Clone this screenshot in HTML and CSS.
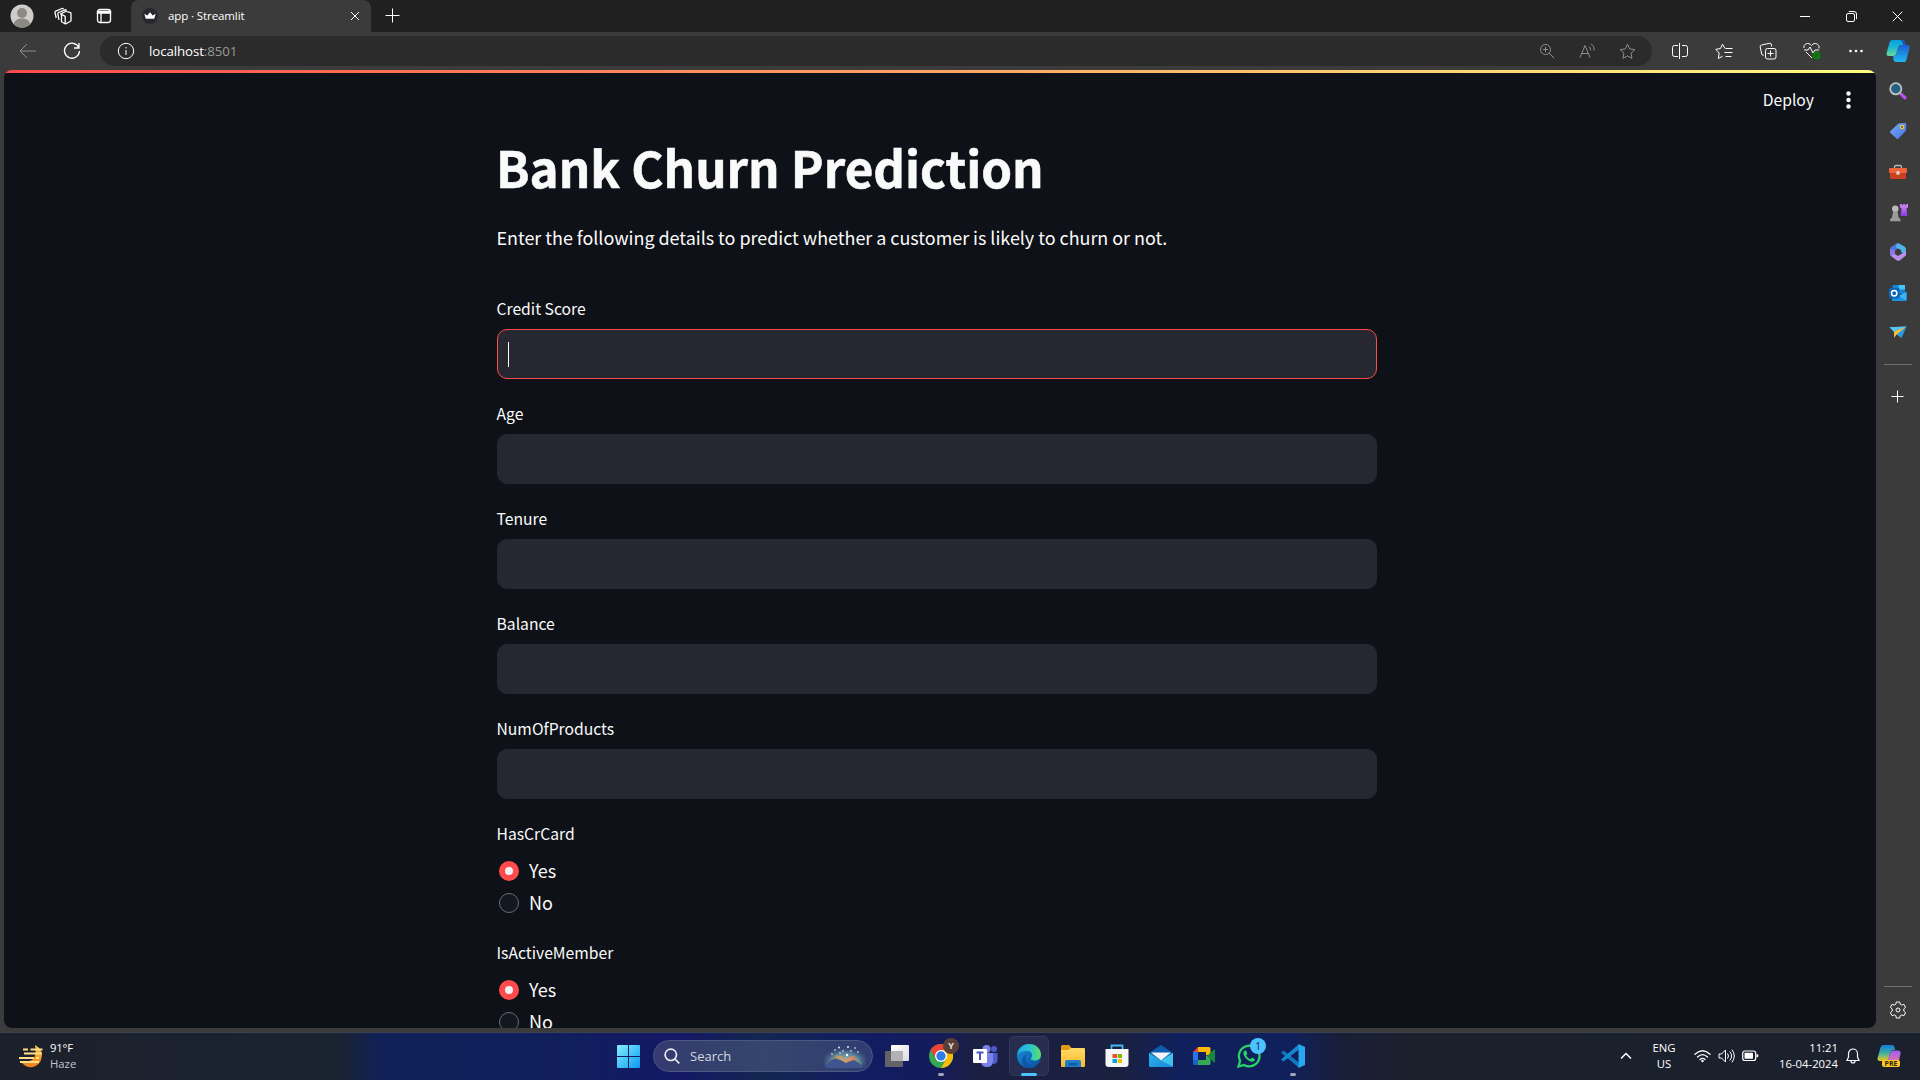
FILE: index.html
```html
<!DOCTYPE html>
<html lang="en">
<head>
<meta charset="utf-8">
<title>app · Streamlit</title>
<link rel="stylesheet" href="styles.css">
</head>
<body>
<svg class="defs" width="0" height="0" aria-hidden="true">
  <defs>
    <linearGradient id="win" x1="0" y1="0" x2="1" y2="1"><stop offset="0" stop-color="#83f0fc"/><stop offset="1" stop-color="#0c98f2"/></linearGradient>
    <linearGradient id="copA" x1="0" y1="0" x2="0" y2="1"><stop offset="0" stop-color="#069fe0"/><stop offset=".5" stop-color="#22b9d0"/><stop offset="1" stop-color="#69dc94"/></linearGradient>
    <linearGradient id="copB" x1="0" y1="0" x2="0" y2="1"><stop offset="0" stop-color="#1c5fd0"/><stop offset="1" stop-color="#20b8f4"/></linearGradient>
    <linearGradient id="preA" x1="0" y1="0" x2="0" y2="1"><stop offset="0" stop-color="#1877dc"/><stop offset=".5" stop-color="#39b1a0"/><stop offset="1" stop-color="#f0c820"/></linearGradient>
    <linearGradient id="preB" x1="0" y1="0" x2="0" y2="1"><stop offset="0" stop-color="#9c5cf5"/><stop offset="1" stop-color="#f87a90"/></linearGradient>
    <linearGradient id="tag" x1="0" y1="0" x2="1" y2="1"><stop offset="0" stop-color="#78a8ff"/><stop offset="1" stop-color="#4973dc"/></linearGradient>
    <linearGradient id="purple" x1="0" y1="0" x2="0" y2="1"><stop offset="0" stop-color="#d78cff"/><stop offset="1" stop-color="#8d36e0"/></linearGradient>
    <linearGradient id="edgeA" x1="0" y1="0" x2="1" y2="0"><stop offset="0" stop-color="#22a7e8"/><stop offset=".55" stop-color="#2cc4d0"/><stop offset="1" stop-color="#5fdf62"/></linearGradient>
    <linearGradient id="edgeB" x1="0" y1="0" x2="1" y2="1"><stop offset="0" stop-color="#1c93dc"/><stop offset="1" stop-color="#0c4c9c"/></linearGradient>
    <linearGradient id="folder" x1="0" y1="0" x2="0" y2="1"><stop offset="0" stop-color="#ffda65"/><stop offset="1" stop-color="#f8b92c"/></linearGradient>
    <linearGradient id="sun" x1="0" y1="0" x2="0" y2="1"><stop offset="0" stop-color="#ffc742"/><stop offset="1" stop-color="#f07c18"/></linearGradient>
    <linearGradient id="view" x1="0" y1="0" x2="1" y2="1"><stop offset="0" stop-color="#fff"/><stop offset="1" stop-color="#dcdce0"/></linearGradient>
    <linearGradient id="mail" x1="0" y1="0" x2="1" y2="1"><stop offset="0" stop-color="#28b5ec"/><stop offset="1" stop-color="#1e86d8"/></linearGradient>
    <linearGradient id="hill" x1="0" y1="0" x2="1" y2="0"><stop offset="0" stop-color="#8f765f"/><stop offset=".45" stop-color="#c7a56a"/><stop offset=".7" stop-color="#d98a66"/><stop offset="1" stop-color="#439485"/></linearGradient>
    <radialGradient id="sky" cx=".5" cy=".75" r=".62"><stop offset="0" stop-color="#b9b6a8"/><stop offset=".55" stop-color="#54809b"/><stop offset="1" stop-color="#303c68" stop-opacity="0"/></radialGradient>
  </defs>
</svg>

<header class="tabstrip">
  <div class="strip-tools">
    <span class="cell avatar"><svg width="24" height="24" viewBox="0 0 24 24"><circle cx="12" cy="12" r="11.500" fill="#cfcdca"/><circle cx="12" cy="9" r="5" fill="#8c8884"/><path d="M4 20.200c0-7.500 16-7.500 16 0a11.500 11.500 0 0 1-16 0z" fill="#8c8884"/></svg></span>
    <span class="cell"><svg class="line bold" width="18" height="18" viewBox="0 0 18 18"><path d="M2.200 11L1 5.500q-.2-1 .7-1.300L8 1.500q1-.2 1.500.7M5 13L3.800 6.800q0-1 .7-1.300L11 2.800q1-.2 1.500.8"/><path d="M8 7.500q-.5.200-.5 1v6.200l3.500 2q.5.300 1 0l4.500-2.500q.5-.3.500-1V6.500q0-.6-.5-.8L12.500 4.500q-.5-.2-1 0L6.800 6.800q-.4.300.2.600l3.500 1.400q.7.300.7 1v6.500"/></svg></span>
    <span class="cell"><svg class="line bold" width="16" height="16" viewBox="0 0 16 16"><rect x="1.500" y="1.500" width="13" height="13" rx="2.500"/><path d="M1.500 3.500h13v1.500h-13z" fill="#fff"/><path d="M5 5v9.500"/></svg></span>
  </div>
  <div class="tab">
    <svg class="favicon" width="16" height="16" viewBox="0 0 16 16"><circle cx="8" cy="8" r="8" fill="#262730"/><path d="M2.300 5.800l3 1.600L8 4.300l2.700 3.100 3-1.600-1.500 5H3.800z" fill="#fff"/></svg>
    <span class="tab-title">app · Streamlit</span>
    <svg class="line" width="10" height="10" viewBox="0 0 10 10"><path d="M1 1l8 8M9 1L1 9"/></svg>
  </div>
  <svg class="line newtab" width="15" height="15" viewBox="0 0 15 15"><path d="M7.500.5v14M.5 7.500h14"/></svg>
  <div class="window-controls">
    <span><svg class="line" width="10" height="10" viewBox="0 0 10 10"><path d="M0 5.500h10"/></svg></span>
    <span><svg class="line" width="11" height="11" viewBox="0 0 11 11"><rect x=".5" y="2.500" width="8" height="8" rx="1.500"/><path d="M2.800.5H8a2.500 2.500 0 0 1 2.500 2.500v5.200"/></svg></span>
    <span><svg class="line" width="11" height="11" viewBox="0 0 11 11"><path d="M.7.7l9.600 9.600M10.300.7L.7 10.300"/></svg></span>
  </div>
</header>

<nav class="toolbar">
  <span class="nav dim"><svg class="line" width="18" height="16" viewBox="0 0 18 16"><path d="M17 8H1M8 1L1 8l7 7"/></svg></span>
  <span class="nav"><svg class="line bold" width="18" height="18" viewBox="0 0 18 18"><path d="M15.800 5.500A7.500 7.500 0 1 0 16.500 9M16 1v5h-5"/></svg></span>
  <div class="address">
    <svg class="line" width="18" height="18" viewBox="0 0 18 18"><circle cx="9" cy="9" r="7.700"/><path d="M9 8v5M9 5v1.500"/></svg>
    <span class="url">localhost<span class="port">:8501</span></span>
    <div class="address-tools dim">
      <span><svg class="line" width="16" height="16" viewBox="0 0 16 16"><circle cx="6.500" cy="6.500" r="5"/><path d="M10.200 10.200l5 5M6.500 4v5M4 6.500h5"/></svg></span>
      <span><svg class="line" width="17" height="16" viewBox="0 0 17 16"><path d="M1 14.500L6 2.500l5 12M2.800 10.500h6.400M10 3.500q1.700 1 1.500 4M12 1q3.700 2 3 6.500"/></svg></span>
      <span><svg class="line" width="17" height="17" viewBox="0 0 17 17"><path d="M8.500 1.200l2.200 4.700 5.100.7-3.700 3.600.9 5.200-4.500-2.500L4 15.400l.9-5.200L1.200 6.600l5.100-.7z"/></svg></span>
    </div>
  </div>
  <div class="browser-actions">
    <span><svg class="line" width="16" height="18" viewBox="0 0 16 18"><path d="M6 3.500H2.500a2 2 0 0 0-2 2v7a2 2 0 0 0 2 2H6M10 3.500h3.500a2 2 0 0 1 2 2v7a2 2 0 0 1-2 2H10M7.500 1v16"/></svg></span>
    <span><svg class="line" width="18" height="17" viewBox="0 0 18 17"><path d="M10 5.500L7.500 1.200 5.500 5.500l-4.700.8L4.200 10l-.9 5.500 4.200-2.200M10.500 5.500h7M9.500 9.500h8M10.500 13.500h6"/></svg></span>
    <span><svg class="line" width="18" height="18" viewBox="0 0 18 18"><rect x="6.500" y="6.500" width="10.500" height="10.500" rx="2"/><path d="M11.500 8.500v6M8.500 11.500h6M12.500 4.500V3a1.800 1.800 0 0 0-2.200-1.700L2.500 3A1.800 1.800 0 0 0 1.200 5l1.500 7a1.800 1.800 0 0 0 2 1.300"/></svg></span>
    <span><svg class="line" width="18" height="18" viewBox="0 0 18 18"><path d="M1 6C0 2 5.500-.5 8.500 3.500 11.500-.5 17 2 16 6.500M1 8h4l2-3 3 6 2-3h4M3 10l6 6"/><circle cx="13.500" cy="13.500" r="4" fill="#107c10" stroke="none"/><path d="M11.800 13.500l1.200 1.200 2.200-2.400" stroke="#0a4f0a"/></svg></span>
    <span><svg width="16" height="4" viewBox="0 0 16 4" fill="#fff"><circle cx="2.500" cy="2" r="1.300"/><circle cx="8" cy="2" r="1.300"/><circle cx="13.500" cy="2" r="1.300"/></svg></span>
  </div>
  <svg class="copilot" width="24" height="22" viewBox="0 0 24 22"><path d="M6 0h8q2 0 2.500 2l.5 3h-2q-2 0-2.600 2l-2 6.500Q9.800 16 7.500 16H3Q0 16 .6 13L3.500 2.500Q4 0 6 0z" fill="url(#copA)"/><path d="M18 22h-8q-2 0-2.500-2L7 16h.7q2 0 2.700-2.500l2-6.500q.6-2 2.600-2H21q3 0 2.600 3L20.500 19.500Q20 22 18 22z" fill="url(#copB)"/><path d="M12 0h2q2 0 2.500 2l.7 3.500h3L19 2q-.5-2-2-2z" fill="#1557c5"/></svg>
</nav>

<div class="workspace">
  <main class="page">
    <div class="app-header">
      <span class="deploy">Deploy</span>
      <svg width="5" height="18" viewBox="0 0 5 18" fill="#fafafa"><circle cx="2.500" cy="2.500" r="2.200"/><circle cx="2.500" cy="9" r="2.200"/><circle cx="2.500" cy="15.500" r="2.200"/></svg>
    </div>
    <div class="form">
      <h1>Bank Churn Prediction</h1>
      <p class="intro">Enter the following details to predict whether a customer is likely to churn or not.</p>
      <div class="field"><label>Credit Score</label><div class="input focused"><span class="caret"></span></div></div>
      <div class="field"><label>Age</label><div class="input"></div></div>
      <div class="field"><label>Tenure</label><div class="input"></div></div>
      <div class="field"><label>Balance</label><div class="input"></div></div>
      <div class="field"><label>NumOfProducts</label><div class="input"></div></div>
      <div class="field radios"><label>HasCrCard</label>
        <div class="option"><span class="radio on"></span><span class="answer">Yes</span></div>
        <div class="option"><span class="radio"></span><span class="answer">No</span></div>
      </div>
      <div class="field radios"><label>IsActiveMember</label>
        <div class="option"><span class="radio on"></span><span class="answer">Yes</span></div>
        <div class="option"><span class="radio"></span><span class="answer">No</span></div>
      </div>
    </div>
  </main>
  <aside class="sidebar">
    <span class="side"><svg width="18" height="18" viewBox="0 0 18 18"><path d="M11.500 11.500l1.500 1.300" stroke="#c9c9c9" stroke-width="2"/><path d="M13 13l3 2.700" stroke="#c14cf5" stroke-width="3.200" stroke-linecap="round"/><circle cx="6.800" cy="6.800" r="5.600" fill="#24627f" stroke="#bfc3c5" stroke-width="1.800"/></svg></span>
    <span class="side"><svg width="18" height="18" viewBox="0 0 18 18"><path d="M9.500 1.500L16 1q1.200 0 1.200 1.200L17 8.500l-7.500 8q-1 1-2 0l-6-5.500q-1-1 0-2z" fill="url(#tag)"/><circle cx="13" cy="5" r="1.700" fill="#415b9c" stroke="#f4cf27" stroke-width="1.200"/></svg></span>
    <span class="side"><svg width="18" height="16" viewBox="0 0 18 16"><path d="M5.500 4.500V3q0-1.500 1.500-1.500h4q1.500 0 1.500 1.500v1.500" fill="none" stroke="#b7b7b7" stroke-width="1.300"/><rect y="4" width="18" height="5" rx="1" fill="#f0643c"/><path d="M1 9h16v5q0 1-1 1H2q-1 0-1-1z" fill="#c9401f"/><circle cx="9" cy="9" r="1.900" fill="#d9d5d1"/></svg></span>
    <span class="side"><svg width="19" height="19" viewBox="0 0 19 19"><path d="M11 1h1.800v1.300h1.300V1h1.800v1.300h1.300V1H19v3.500l-1.500 1 .8 7.500h-6.600l.8-7.500-1.500-1z" fill="url(#purple)"/><circle cx="6.300" cy="5.800" r="3.300" fill="#b9b9b9"/><path d="M4 8.500h4.600l.8 5.500 2.100 2.500v1.700H1v-1.700L3.200 14z" fill="#9b9b9b"/></svg></span>
    <span class="side"><svg width="18" height="18" viewBox="0 0 18 18"><path d="M1 5.500Q1 4.500 2 4l5.500-3.500Q9 0 9.500 1v4L6 7.500v6L2 13.500 1 12z" fill="#4c74d8"/><path d="M8 .5q1-.5 2 0l5.500 3q1.500 1 1.500 2.500v5.500L12 9V7L7 4.500z" fill="#4fb4ec"/><path d="M1.500 12.500L6 11l3 2 8-5v3.500q0 1-1 1.700l-5 4q-2 1-3.500 0z" fill="#b890ea"/><path d="M1 6v6l5-1V7z" fill="#8a78e0"/></svg></span>
    <span class="side"><svg width="18" height="18" viewBox="0 0 18 18"><path d="M3.500 1h12.500v9H3.500z" fill="#1784d8"/><path d="M9.500 1h6.500v4.500H9.500z" fill="#44c5f7"/><path d="M3 9l7 3 7.500-4v8q0 1-1 1H4q-1 0-1-1z" fill="#1b93e5"/><path d="M17.500 8v8.500l-8-4.500z" fill="#38b5f0"/><rect y="4" width="10.500" height="10.500" rx="1" fill="#0a65b7"/><circle cx="5.200" cy="9.200" r="2.700" fill="none" stroke="#fff" stroke-width="1.500"/></svg></span>
    <span class="side"><svg width="18" height="16" viewBox="0 0 18 16"><path d="M.5 2.200L17.500 1.500 12.500 13l-5-3.500z" fill="#2b9be9"/><path d="M.5 2.200l4.500 4.500L17.500 1.500z" fill="#55c7f5"/><path d="M5 6.700L17 1.800 7.500 9.500 5.200 13z" fill="#ffc229"/></svg></span>
    <hr>
    <span class="side add"><svg class="line" width="13" height="13" viewBox="0 0 13 13"><path d="M6.500.5v12M.5 6.500h12"/></svg></span>
    <div class="side-bottom">
      <hr>
      <span class="side gear"><svg class="line" width="18" height="18" viewBox="0 0 18 18"><path d="M7.300 1h3.400l.5 2.300 1.400.8 2.300-.8 1.700 3-1.800 1.600v2.200l1.800 1.600-1.700 3-2.300-.8-1.400.8-.5 2.300H7.300l-.5-2.300-1.400-.8-2.300.8-1.700-3 1.800-1.600V7.900L1.400 6.300l1.700-3 2.300.8 1.400-.8z" stroke-linejoin="round"/><circle cx="9" cy="9" r="2"/></svg></span>
    </div>
  </aside>
</div>

<footer class="taskbar">
  <div class="weather">
    <svg width="25" height="24" viewBox="0 0 25 24"><path d="M16 1q8.500 4.500 6.500 13A10.800 10.800 0 0 1 2 17q6 2 11-1t3-15z" fill="url(#sun)"/><path d="M4 5.500h5M11.500 5.500h12M5 9.500h18M0 14h15M17 14h3M1 18h19" stroke="#ffdf88" stroke-width="1.800"/></svg>
    <div class="weather-text"><span class="temp">91°F</span><span>Haze</span></div>
  </div>
  <div class="apps">
    <span class="app"><svg width="23" height="23" viewBox="0 0 23 23"><path d="M1 0h10v11H0V1q0-1 1-1zM12 0h10q1 0 1 1v10H12zM0 12h11v11H1q-1 0-1-1zM12 12h11v10q0 1-1 1H12z" fill="url(#win)"/></svg></span>
    <div class="search">
      <svg width="16" height="16" viewBox="0 0 16 16" fill="none" stroke="#e8eaf0" stroke-width="1.700" stroke-linecap="round"><circle cx="6.800" cy="6.800" r="5.700"/><path d="M11 11l3.800 3.800"/></svg>
      <span class="search-label">Search</span>
      <svg width="42" height="26" viewBox="0 0 42 26"><rect width="42" height="24" fill="url(#sky)"/><path d="M2 20q7-3 10-8 5 0 9 5 3-2 6-4 6-1 11 8v2H2z" fill="url(#hill)"/><path d="M1 22q6-6 11-6.500 5 1 10 4.500 4-2 8-3l8 5q2 3-1 3H4q-3 0-3-3z" fill="#3e5590"/><g fill="#fff"><circle cx="11" cy="7" r=".8"/><circle cx="15" cy="4.500" r=".9"/><circle cx="19" cy="8" r=".8"/><circle cx="24" cy="4" r=".9"/><circle cx="27" cy="8" r=".8"/><circle cx="31" cy="5" r=".8"/><circle cx="8" cy="11" r=".8"/><circle cx="16" cy="10" r=".8"/><circle cx="23" cy="12" r="1.200"/><circle cx="34" cy="9" r=".8"/></g></svg>
    </div>
    <span class="app"><svg width="24" height="22" viewBox="0 0 24 22"><rect y="6" width="18" height="16" rx="1" fill="#646468"/><rect x="6" width="18" height="16" rx="1" fill="url(#view)"/><path d="M6 6h12v10H6z" fill="#b2b2b6"/></svg></span>
    <span class="app running"><svg width="24" height="24" viewBox="0 0 24 24"><circle cx="12" cy="12" r="12" fill="#34a853"/><path d="M1.600 6A12 12 0 0 1 22.400 6H12l-5.200 9z" fill="#ea4335"/><path d="M22.400 6A12 12 0 0 1 12 24l5.200-9L12 6z" fill="#fbbc05"/><circle cx="12" cy="12" r="6" fill="#fff"/><circle cx="12" cy="12" r="4.700" fill="#2f7de9"/></svg><b class="badge profile">Y</b></span>
    <span class="app"><svg width="25" height="22" viewBox="0 0 25 22"><circle cx="21" cy="4" r="3" fill="#5059c9"/><path d="M17 8h7.500v7q0 4-4.500 4z" fill="#5059c9"/><circle cx="13.500" cy="4" r="4" fill="#7b83eb"/><path d="M8 8h12v8q0 6-6 6t-6-6z" fill="#7b83eb"/><rect y="4" width="14" height="14" rx="1" fill="#fff"/><path d="M3.500 7.500h7M7 7.500v7.500" stroke="#4b53bc" stroke-width="2"/></svg></span>
    <span class="app active"><svg width="24" height="24" viewBox="0 0 24 24"><circle cx="12" cy="12" r="12" fill="url(#edgeB)"/><path d="M0 11C1 4 6 0 12 0c7 0 12 5 12 10.500 0 4-3 6-6.500 6-3 0-4.500-1.300-3-3 2-4-1-6.500-4.500-6.500C5 7 1 9 0 11z" fill="url(#edgeA)"/><path d="M8.500 14c0 6 6 9 12.800 5.500Q17 25 11 24C4 23 3 13 10 9.500Q8.500 11 8.500 14z" fill="#0b58a8"/></svg></span>
    <span class="app"><svg width="24" height="22" viewBox="0 0 24 22"><path d="M0 1.500Q0 0 1.500 0H8l3 3.500V8H0z" fill="#e09b16"/><path d="M0 5h7.500L10 3h13q1 0 1 1v17q0 1-1 1H1q-1 0-1-1z" fill="url(#folder)"/><path d="M4 22v-5q0-2 2-2h12q2 0 2 2v5z" fill="#1d7fcb"/><path d="M7.500 18h9v2.500h-9z" fill="#105c9f"/></svg></span>
    <span class="app"><svg width="24" height="24" viewBox="0 0 24 24"><path d="M6.500 6V1.500h11V6" fill="none" stroke="#43b8f1" stroke-width="1.800"/><path d="M.5 5h23v15q0 3-3 3h-17q-3 0-3-3z" fill="#f4f5f7"/><path d="M7.500 10H12v4H7.500z" fill="#f25022"/><path d="M12.700 10h4.300v4h-4.300z" fill="#7fba00"/><path d="M7.500 15H12v4H7.500z" fill="#00a4ef"/><path d="M12.700 15h4.300v4h-4.300z" fill="#ffb900"/></svg></span>
    <span class="app"><svg width="24" height="22" viewBox="0 0 24 22"><path d="M0 8L12 0l12 8v5H0z" fill="#0d5cad"/><path d="M0 8l12 7.500L24 8v13q0 1-1 1H1q-1 0-1-1z" fill="url(#mail)"/><path d="M2 7.500h20l-10 8z" fill="#f1f5fa"/><path d="M12 15.500L24 8v13.500z" fill="#4fd3f7" opacity=".7"/></svg></span>
    <span class="app"><svg width="24" height="20" viewBox="0 0 24 20"><path d="M5 1v5H0z" fill="#ea4335"/><path d="M0 6h5v8H0z" fill="#2874e8"/><path d="M0 14h5v5H1.500Q0 19 0 17.500z" fill="#1a62ca"/><path d="M5 1h11q1.500 0 1.500 1.500V10L13 9V6H5z" fill="#fbb905"/><path d="M5 14h8v-4l4.500-1v8.500q0 1.500-1.500 1.500H5z" fill="#35a853"/><path d="M14 10l6.500-6q1.500-1 1.500.5v11q0 1.500-1.500.5z" fill="#188641"/></svg></span>
    <span class="app"><svg width="24" height="24" viewBox="0 0 24 24"><path d="M1.500 22.500l1.600-5.700A10.300 10.300 0 1 1 7 20.900z" fill="none" stroke="#27d466" stroke-width="2.300"/><path d="M8 6.500q-2.700 1.700-1 5 2.700 5 7.500 6.300 3 .3 3.500-2.600l-3-1.600-1.500 1.600q-3-1-4.400-4L10.400 10 9.200 6.800z" fill="#27d466"/></svg><b class="badge count">1</b></span>
    <span class="app running"><svg width="24" height="24" viewBox="0 0 24 24"><path d="M0 8.500l2.500-2L18 18.500V24z" fill="#0d78be"/><path d="M0 15.500L18 0v5.500L2.500 17.500z" fill="#1685cf"/><path d="M17.500 0L24 3v18l-6.500 3z" fill="#29a8ef"/></svg></span>
  </div>
  <div class="tray">
    <svg class="line chevron" width="12" height="8" viewBox="0 0 12 8"><path d="M1 6.500l5-5 5 5" stroke-width="1.500"/></svg>
    <div class="lang"><span>ENG</span><span>US</span></div>
    <div class="status">
      <svg class="line" width="17" height="14" viewBox="0 0 17 14" stroke-linecap="round"><path d="M1 5.300q7.500-7 15 0M3.500 8q5-4.800 10 0M6 10.500q2.500-2.300 5 0" stroke-width="1.300"/><circle cx="8.500" cy="12" r="1.200" fill="#fff" stroke="none"/></svg>
      <svg class="line" width="17" height="14" viewBox="0 0 17 14"><path d="M1 5h2.500L7.500 1v12L3.500 9H1zM9.500 4.500q2 2.500 0 5M11.800 2.500q3.500 4.500 0 9M14 .7q4.500 6.300 0 12.600"/></svg>
      <svg width="17" height="12" viewBox="0 0 17 12"><rect x=".7" y="1" width="13" height="9.500" rx="2.300" fill="none" stroke="#fff" stroke-width="1.200"/><rect x="2.500" y="2.800" width="8.500" height="6" rx=".8" fill="#fff"/><path d="M14.500 4q2 0 2 1.700t-2 1.700z" fill="#fff"/></svg>
    </div>
    <div class="clock"><span>11:21</span><span>16-04-2024</span></div>
    <svg class="line bell" width="14" height="16" viewBox="0 0 14 16"><path d="M1 12.500L2.500 9V5.500a4.500 4.500 0 0 1 9 0V9l1.500 3.500zM5 13q0 2 2 2t2-2" stroke-width="1.200"/></svg>
    <div class="pre"><svg width="24" height="22" viewBox="0 0 24 22"><path d="M6 0h9q2 0 2.500 2l.5 3h-2q-2 0-2.600 2l-2 7Q10.800 16 8.500 16H3Q0 16 .6 13L3.500 2.500Q4 0 6 0z" fill="url(#preA)"/><path d="M19 20h-9q-2 0-2.500-2L7 16h1.700q2 0 2.700-2.500l2-6q.6-2 2.600-2H21q3 0 2.600 3L21.500 17.500Q21 20 19 20z" fill="url(#preB)"/></svg><b>PRE</b></div>
  </div>
</footer>
</body>
</html>
```
FILE: styles.css
```css
* { box-sizing: border-box; }
body {
  margin: 0;
  width: 1920px;
  height: 1080px;
  overflow: hidden;
  display: flex;
  flex-direction: column;
  background: #3b3b3b;
  color: #fff;
  font-family: "Open Sans", "Noto Sans", sans-serif;
  font-size: 12px;
}
svg { display: block; flex: none; }
.defs { position: absolute; }
.line { fill: none; stroke: #fff; stroke-width: 1; }
.line.bold { stroke-width: 1.3; }
.dim .line { stroke: #8f8f8f; }

/* Tab strip */
.tabstrip { display: flex; height: 32px; background: #202020; }
.strip-tools { display: flex; width: 131px; padding-left: 1px; }
.strip-tools .cell { display: grid; place-items: center; width: 41px; }
.strip-tools .avatar { width: 42px; }
.strip-tools .cell + .cell { margin-right: 1px; margin-left: -1px; }
.tab {
  display: flex;
  align-items: center;
  width: 240px;
  padding: 0 11px 0 11px;
  background: #3b3b3b;
  border-radius: 8px 8px 0 0;
}
.tab-title { flex: 1; padding: 0 0 1px 10px; font-size: 11.5px; letter-spacing: -.1px; }
.newtab { margin: 8px 0 0 14px; }
.window-controls { display: flex; margin-left: auto; }
.window-controls span { display: grid; place-items: center; width: 46px; }

/* Toolbar */
.toolbar { display: flex; align-items: center; height: 38px; padding-left: 6px; }
.nav { display: grid; place-items: center; width: 44px; }
.address {
  display: flex;
  align-items: center;
  width: 1552px;
  height: 30px;
  margin-left: 6px;
  padding-left: 17px;
  padding-right: 5px;
  border-radius: 15px;
  background: #2b2b2b;
}
.url { margin-left: 14px; font-size: 13.3px; letter-spacing: -.1px; }
.port { color: #9a9a9a; }
.address-tools { display: flex; margin-left: auto; }
.address-tools span { display: grid; place-items: center; width: 40px; }
.browser-actions { display: flex; padding-left: 6px; }
.browser-actions span { display: grid; place-items: center; width: 44px; }
.copilot { margin-left: 8px; }

/* Web page */
.workspace { display: flex; height: 962px; }
.page {
  width: 1872px;
  height: 958px;
  margin-left: 4px;
  overflow: hidden;
  border-radius: 8px;
  color: #fafafa;
  background: linear-gradient(90deg, #ff4b4b, #fffd80) top / 100% 3px no-repeat #0e1117;
  font-family: "Noto Sans CJK SC", "Noto Sans", sans-serif;
}
.app-header {
  display: flex;
  justify-content: flex-end;
  align-items: center;
  height: 60px;
  padding-right: 25px;
}
.deploy { margin-right: 32px; padding-bottom: 2px; font-size: 15.7px; }
.form { width: 880px; margin-left: 493px; padding-top: 4px; }
h1 {
  margin: 0 0 0 -1px;
  height: 66px;
  line-height: 66px;
  font-size: 49.3px;
  font-weight: 700;
  -webkit-text-stroke: .6px #fafafa;
}
.intro { margin: 21px 0 0 -.5px; height: 32px; line-height: 32px; font-size: 17.95px; letter-spacing: -.02px; white-space: nowrap; }
.intro + .field { margin-top: 41px; }
.field { display: flex; flex-direction: column; margin-bottom: 20px; }
.field label { height: 35px; margin-left: -.5px; line-height: 30px; font-size: 15.7px; }
.input {
  display: flex;
  align-items: center;
  height: 50px;
  padding-left: 10px;
  border: 1px solid #262730;
  border-radius: 10px;
  background: #262730;
}
.input.focused { border-color: #ff4b4b; }
.caret { width: 1px; height: 25px; background: #fff; }
.radios { height: 99px; }
.radios label { height: 36px; }
.option { display: flex; align-items: center; gap: 10px; flex: none; height: 32px; padding: 1px 0 0 2px; font-size: 18px; }
.answer { line-height: 31px; }
.radio { width: 20px; height: 20px; border: 1px solid #6a6c72; border-radius: 50%; background: #13171f; }
.radio.on { border: 6px solid #ff4b4b; background: #f0f2f6; }

/* Edge sidebar */
.sidebar { display: flex; flex-direction: column; width: 44px; padding-top: 1px; align-items: center; }
.side { display: grid; place-items: center; flex: none; width: 43px; height: 40.3px; }
.sidebar hr { width: 28px; height: 1px; margin: 11px 0 0; border: 0; background: #6f6f6f; }
.side.add { width: 44px; height: 62px; padding-right: 1px; }
.side-bottom { display: flex; flex-direction: column; align-items: center; margin-top: auto; }
.side-bottom hr { margin: 0; }
.side.gear { height: 45px; }

/* Taskbar */
.taskbar {
  display: grid;
  grid-template-columns: 606px 710px 1fr;
  height: 48px;
  padding-bottom: 1px;
  border-top: 1px solid #3b4252;
  background: linear-gradient(90deg, #1c202b 0, #1a2331 340px, #102158 380px, #101f5c 560px, #141866 680px, #13264f 760px, #111d62 860px, #141b5c 930px, #1b1f42 980px, #1a2040 1120px, #10205c 1180px, #10205a 1290px, #191e38 1340px, #1c202b 1420px, #1b212c 1600px, #1b202d 1920px);
}
.weather { display: flex; align-items: center; padding-left: 19px; gap: 6px; }
.weather-text, .lang, .clock { display: flex; flex-direction: column; font-size: 11.3px; line-height: 16px; }
.weather-text .temp { letter-spacing: -.2px; }
.weather-text span + span { color: #c3c6cc; }
.apps { display: flex; align-items: center; }
.app { display: grid; place-items: center; position: relative; flex: none; width: 44px; height: 46px; }
.search {
  display: flex;
  align-items: center;
  width: 220px;
  height: 32px;
  margin: 0 2px 0 3px;
  padding: 0 6px 0 10px;
  border: 1px solid #4b5880;
  border-radius: 16px;
  background: linear-gradient(90deg, #343a70, #34466b 50%, #303c74);
}
.search-label { flex: 1; padding-left: 10px; color: #d4d7df; font-size: 13px; }
.running::after, .active::after {
  content: "";
  position: absolute;
  bottom: 3px;
  width: 6px;
  height: 3px;
  border-radius: 2px;
  background: #a3a6b6;
}
.active::after { width: 16px; background: #4cc2ff; }
.active::before {
  content: "";
  position: absolute;
  inset: 3px 2px 3px 2px;
  border: 1px solid #323959;
  border-radius: 5px;
  background: #262d50;
}
.active svg { position: relative; }
.badge {
  position: absolute;
  top: 5px;
  right: 5px;
  width: 16px;
  height: 16px;
  border-radius: 50%;
  text-align: center;
  line-height: 16px;
  font-size: 9px;
}
.profile { right: 4px; background: #593f38; color: #ece5e2; }
.count { background: #4cc2ff; color: #10283a; font-weight: 400; font-size: 10px; right: 5px; }
.tray { display: flex; align-items: center; padding-left: 304px; }
.lang { align-items: center; width: 26px; margin-left: 19px; }
.status { display: flex; align-items: center; gap: 7px; margin-left: 17px; }
.clock { width: 64px; margin-left: 15px; align-items: flex-end; }
.bell { margin-left: 8px; }
.pre { position: relative; margin-left: 17px; }
.pre b { position: absolute; left: 5px; top: 15px; width: 18px; height: 7px; border-radius: 2px; background: #ffc91f; color: #2a2413; font-size: 7px; line-height: 7px; text-align: center; }
```
